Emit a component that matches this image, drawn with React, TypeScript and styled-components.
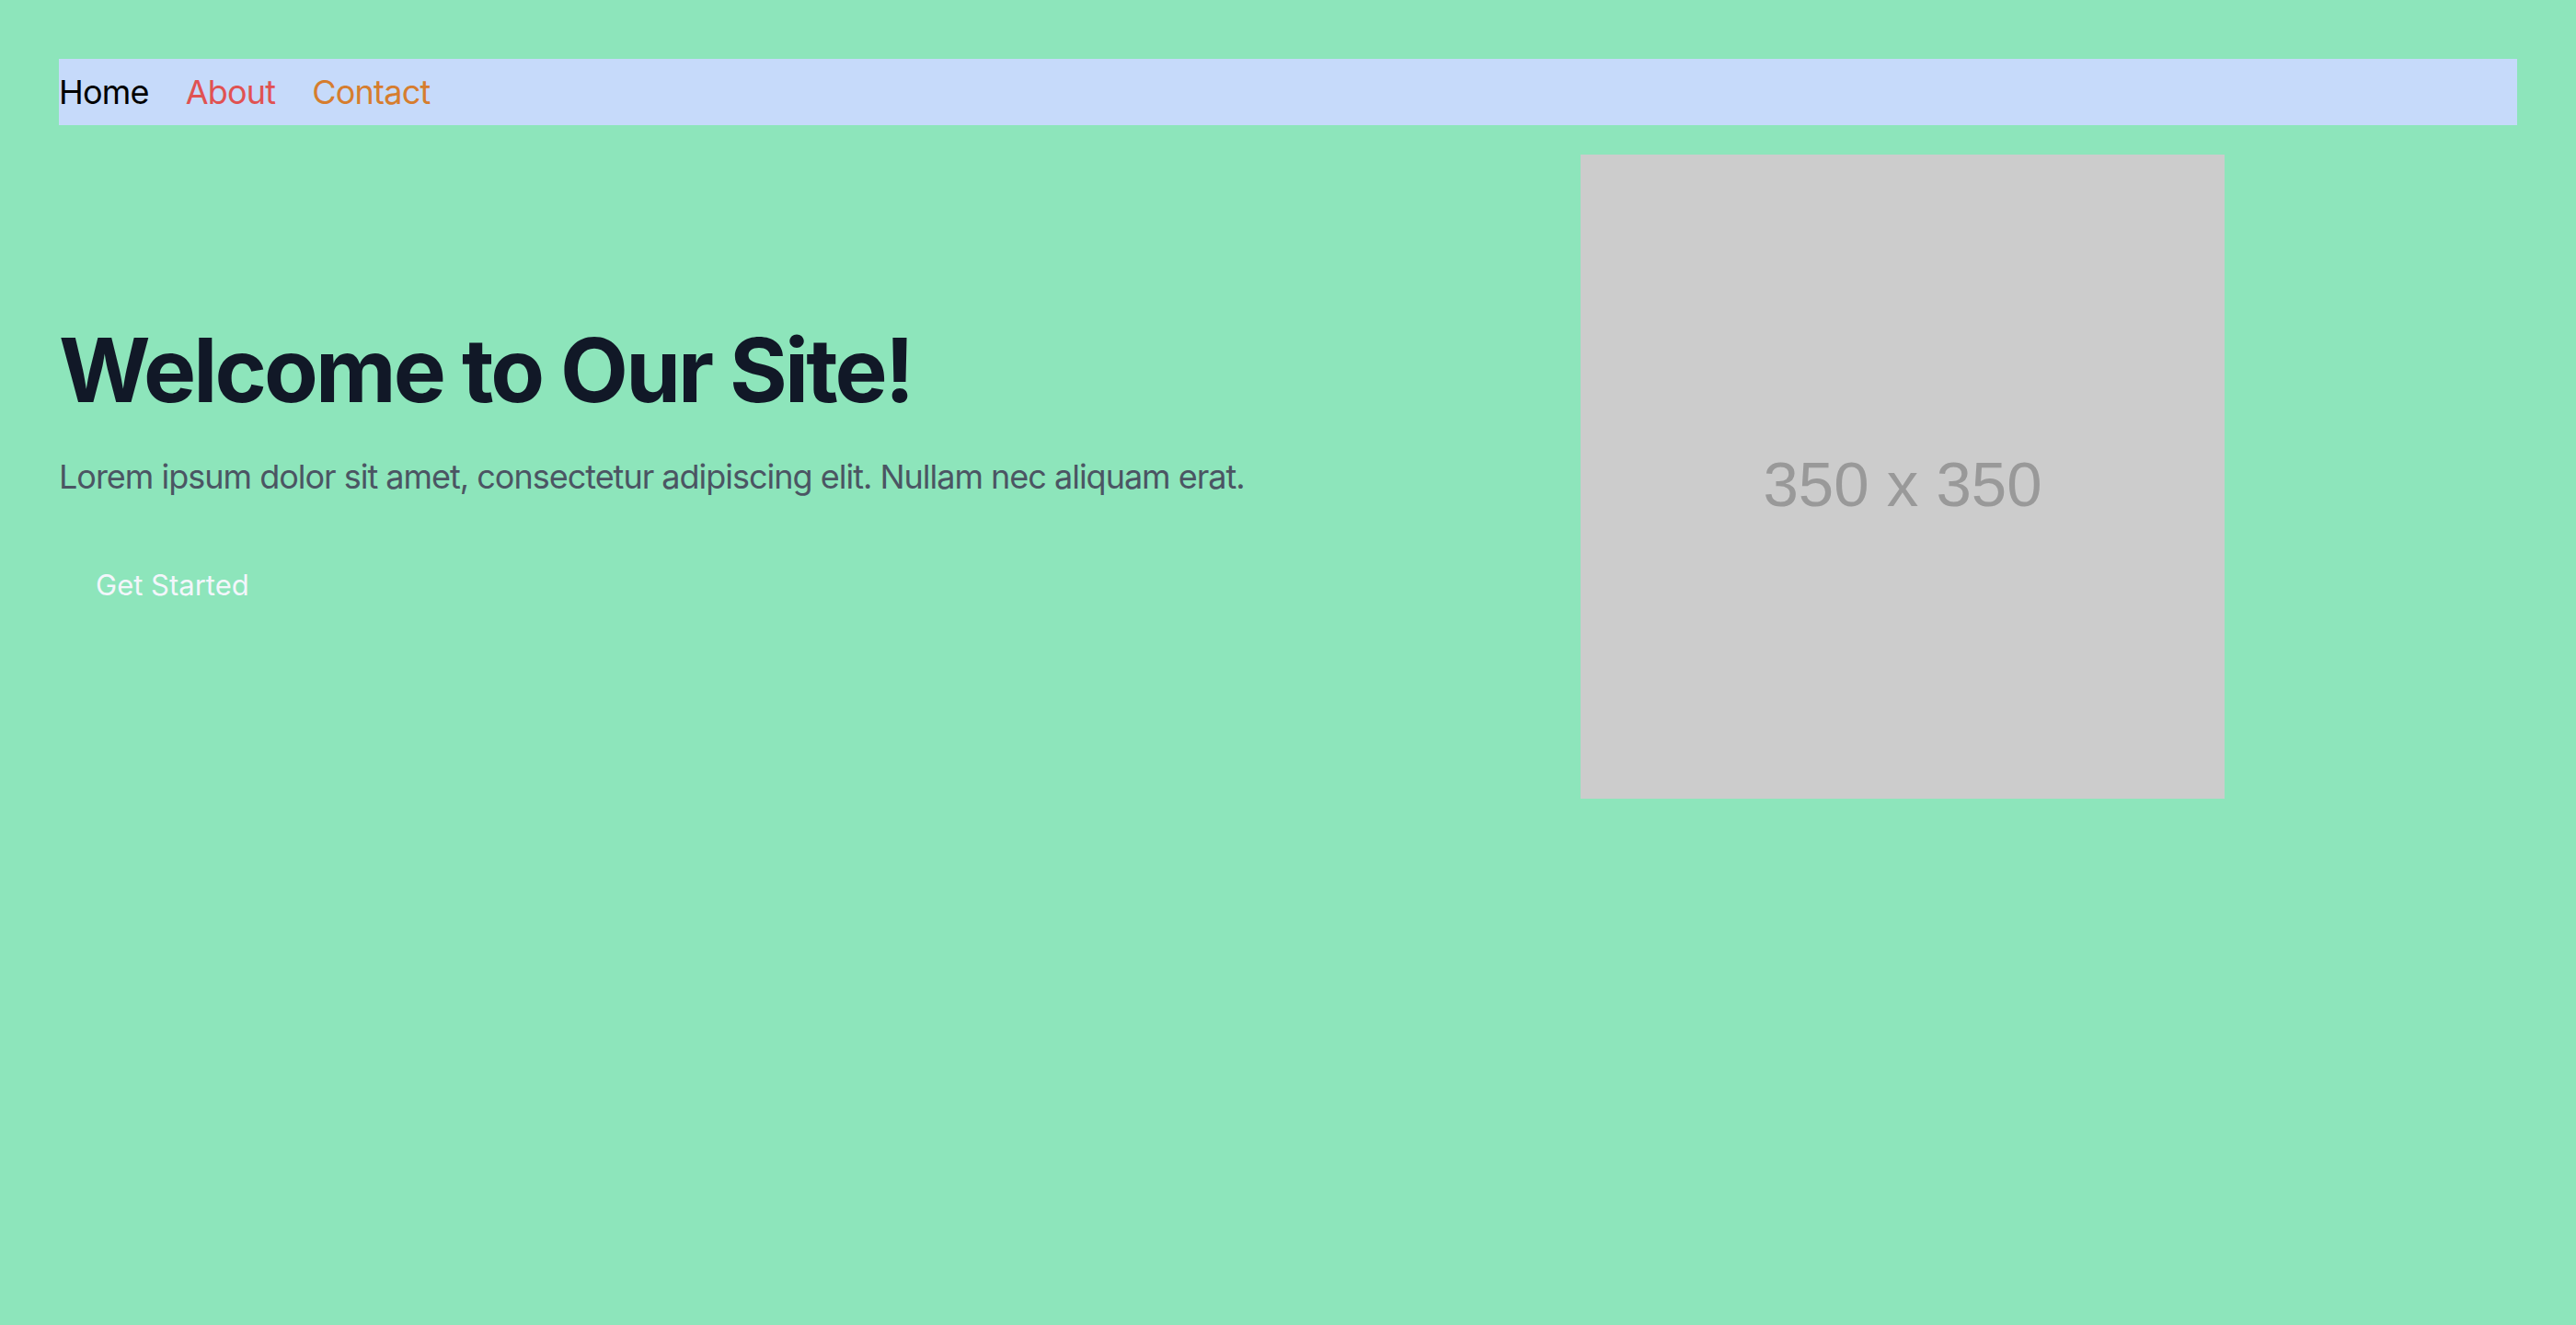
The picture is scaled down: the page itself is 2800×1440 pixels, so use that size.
import React from "react";
import styled, { createGlobalStyle } from "styled-components";

const GlobalStyle = createGlobalStyle`
  html, body {
    margin: 0;
    padding: 0;
    background: #8de5bb;
    min-height: 100vh;
  }
  body {
    font-family: Inter, "Noto Sans", "Liberation Sans", sans-serif;
  }
  * { box-sizing: border-box; }
`;

const Page = styled.div`
  padding: 64px;
  min-height: 100vh;
  background: #8de5bb;
`;

const NavBar = styled.nav`
  display: flex;
  align-items: center;
  gap: 40px;
  padding: 16px 0;
  background: #c6dafa;
  margin-bottom: 32px;
`;

const NavLink = styled.a<{ $color: string }>`
  font-size: 36px;
  line-height: 40px;
  letter-spacing: -0.022em;
  color: ${(p) => p.$color};
  text-decoration: none;
`;

const Hero = styled.section`
  display: grid;
  grid-template-columns: 1fr 1fr;
  align-items: center;
`;

const TextColumn = styled.div`
  display: flex;
  flex-direction: column;
  align-items: flex-start;
  padding-top: 4px;
`;

const Heading = styled.h1`
  margin: 0;
  font-size: 96px;
  line-height: 1;
  font-weight: 700;
  letter-spacing: -0.03em;
  color: #111827;
`;

const Lead = styled.p`
  margin: 48px 0 0;
  font-size: 36px;
  line-height: 40px;
  letter-spacing: -0.028em;
  white-space: nowrap;
  color: #4b5563;
`;

const CtaButton = styled.button`
  margin-top: 48px;
  padding: 32px 40px;
  border: none;
  background: transparent;
  color: #f3f6fb;
  font-family: inherit;
  font-size: 31px;
  line-height: 36px;
  cursor: pointer;
`;

const ImageColumn = styled.div`
  display: flex;
  justify-content: center;
`;

const Placeholder = styled.svg`
  display: block;
  width: 700px;
  height: 700px;
`;

export default function App() {
  return (
    <>
      <GlobalStyle />
      <Page>
        <NavBar>
          <NavLink href="#" $color="#000000">Home</NavLink>
          <NavLink href="#" $color="#e05252">About</NavLink>
          <NavLink href="#" $color="#d67d2e">Contact</NavLink>
        </NavBar>
        <Hero>
          <TextColumn>
            <Heading>Welcome to Our Site!</Heading>
            <Lead>
              Lorem ipsum dolor sit amet, consectetur adipiscing elit. Nullam nec aliquam erat.
            </Lead>
            <CtaButton>Get Started</CtaButton>
          </TextColumn>
          <ImageColumn>
            <Placeholder viewBox="0 0 700 700">
              <rect width="700" height="700" fill="#cccccc" />
              <text
                x="350"
                y="382"
                textAnchor="middle"
                fill="#999999"
                fontFamily="'Liberation Sans', Arial, sans-serif"
                fontSize="69"
              >
                350 x 350
              </text>
            </Placeholder>
          </ImageColumn>
        </Hero>
      </Page>
    </>
  );
}
